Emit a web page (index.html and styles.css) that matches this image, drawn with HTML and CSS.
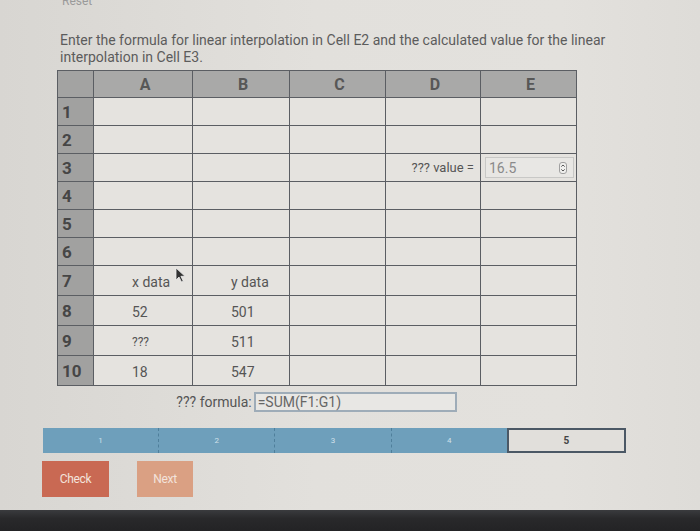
FILE: index.html
```html
<!DOCTYPE html>
<html>
<head>
<meta charset="utf-8">
<link rel="stylesheet" href="styles.css">
</head>
<body>
<div class="page">
  <div class="reset"><span>Reset</span></div>
  <p class="prompt">Enter the formula for linear interpolation in Cell E2 and the calculated value for the linear<br>interpolation in Cell E3.</p>
  <div class="sheet-wrap">
    <table class="sheet">
      <colgroup><col class="c-h"><col class="c-a"><col class="c-b"><col class="c-c"><col class="c-d"><col class="c-e"></colgroup>
      <tr class="head"><th></th><th>A</th><th>B</th><th>C</th><th>D</th><th>E</th></tr>
      <tr><th>1</th><td></td><td></td><td></td><td></td><td></td></tr>
      <tr><th>2</th><td></td><td></td><td></td><td></td><td></td></tr>
      <tr><th>3</th><td></td><td></td><td></td><td class="right">??? value =</td><td class="in-cell"><div class="num-input"><span>16.5</span><span class="spin"><svg width="8" height="12" viewBox="0 0 8 12"><rect x="0.5" y="0.5" width="7" height="11" rx="2.5" fill="#f0f0ee" stroke="#a0a0a0"/><path d="M2.3 4.6 L4 3 L5.7 4.6" fill="none" stroke="#555" stroke-width="1"/><path d="M2.3 7.4 L4 9 L5.7 7.4" fill="none" stroke="#555" stroke-width="1"/></svg></span></div></td></tr>
      <tr><th>4</th><td></td><td></td><td></td><td></td><td></td></tr>
      <tr><th>5</th><td></td><td></td><td></td><td></td><td></td></tr>
      <tr><th>6</th><td></td><td></td><td></td><td></td><td></td></tr>
      <tr><th>7</th><td class="val">x data</td><td class="val">y data</td><td></td><td></td><td></td></tr>
      <tr><th>8</th><td class="val">52</td><td class="val">501</td><td></td><td></td><td></td></tr>
      <tr><th>9</th><td class="val small">???</td><td class="val">511</td><td></td><td></td><td></td></tr>
      <tr><th>10</th><td class="val">18</td><td class="val">547</td><td></td><td></td><td></td></tr>
    </table>
    <svg class="cursor" width="11" height="16" viewBox="0 0 11 16"><path d="M1 1 L1 13 L4 10 L6.5 15 L8.3 14.2 L5.9 9.3 L10 9.3 Z" fill="#333" stroke="#eee" stroke-width="0.8"/></svg>
  </div>
  <div class="formula-row">
    <span class="label">??? formula:</span>
    <div class="text-input">=SUM(F1:G1)</div>
  </div>
  <div class="progress">
    <div class="seg">1</div>
    <div class="seg">2</div>
    <div class="seg">3</div>
    <div class="seg">4</div>
    <div class="seg current">5</div>
  </div>
  <div class="buttons">
    <div class="btn check">Check</div>
    <div class="btn next">Next</div>
  </div>
</div>
<div class="bezel"></div>
</body>
</html>
```
FILE: styles.css
```css
html, body {
  margin: 0;
  padding: 0;
}
body {
  width: 700px;
  height: 531px;
  overflow: hidden;
  font-family: Roboto, "Liberation Sans", sans-serif;
  background: linear-gradient(90deg, #d8d6d2 0%, #e2e0dc 45%, #e3e1dd 80%, #dedcd8 100%);
}
.page {
  height: 510px;
  position: relative;
}
.reset {
  height: 7px;
  overflow: hidden;
  display: flex;
  align-items: flex-end;
  padding-left: 62px;
  font-size: 12px;
  line-height: 12px;
  color: #9a9a9a;
}
.prompt {
  margin: 25px 0 0 60px;
  font-size: 14px;
  line-height: 17px;
  color: #5c5c5c;
  white-space: nowrap;
}
.sheet-wrap {
  position: relative;
  margin: 4px 0 0 57px;
  width: 519px;
}
.sheet {
  border-collapse: collapse;
  table-layout: fixed;
  width: 519px;
  background: #e5e3df;
}
.c-h { width: 36px; }
.c-a { width: 99px; }
.c-b { width: 97px; }
.c-c { width: 96px; }
.c-d { width: 95px; }
.c-e { width: 96px; }
.sheet th, .sheet td {
  border: 1.5px solid #5b5e63;
  height: 27px;
  padding: 0;
  font-size: 14px;
  color: #555;
}
.sheet tr.head th {
  height: 26px;
  background: #a9a9a8;
  color: #575757;
  font-weight: bold;
  font-size: 16px;
  text-align: center;
}
.sheet tr.head th:first-child {
  background: #a3a3a2;
}
.sheet th {
  background: #a1a1a0;
  text-align: left;
  padding-left: 4px;
  font-size: 17px;
  font-weight: bold;
  color: #464646;
}
.sheet td.val {
  padding-left: 38px;
  padding-top: 2px;
}
.sheet td.val.small {
  font-size: 12px;
}
.sheet td.right {
  text-align: right;
  padding-right: 6px;
  font-size: 13px;
}
.sheet td.in-cell {
  padding: 0 2px 0 4px;
}
.num-input {
  height: 19px;
  border: 1px solid #c8c8c6;
  background: #e8e7e4;
  display: flex;
  align-items: center;
  justify-content: space-between;
  padding: 0 6px 0 3px;
  font-size: 14px;
  color: #8a8a8a;
}
.spin {
  display: flex;
}
.cursor {
  position: absolute;
  left: 118px;
  top: 197px;
}
.formula-row {
  display: flex;
  align-items: center;
  justify-content: center;
  width: 519px;
  margin: 6px 0 0 57px;
  gap: 2px;
}
.formula-row .label {
  font-size: 14px;
  color: #555;
}
.text-input {
  width: 195px;
  height: 16px;
  line-height: 16px;
  border: 2px solid #9eacb8;
  background: #e8e7e4;
  font-size: 14px;
  color: #666;
  padding: 0 2px;
}
.progress {
  display: flex;
  margin: 16px 0 0 43px;
  width: 583px;
  height: 25px;
}
.seg {
  flex: 1;
  background: #6e9fbb;
  color: #d0e0ea;
  font-size: 8px;
  display: flex;
  align-items: center;
  justify-content: center;
  border-left: 1px dashed #4f7f9b;
}
.seg:first-child {
  border-left: none;
}
.seg.current {
  background: #e1dfdb;
  border: 2px solid #4b5865;
  color: #444;
  font-weight: bold;
  font-size: 10px;
}
.buttons {
  display: flex;
  gap: 28px;
  margin: 8px 0 0 42px;
}
.btn {
  height: 36px;
  display: flex;
  align-items: center;
  justify-content: center;
  font-size: 12px;
  color: #f3e3dc;
  letter-spacing: -0.3px;
}
.btn.check {
  width: 67px;
  background: #c96953;
}
.btn.next {
  width: 56px;
  background: #daa083;
}
.bezel {
  height: 21px;
  background: linear-gradient(180deg, #3a3b3e 0%, #29292b 40%, #232325 100%);
}
```
